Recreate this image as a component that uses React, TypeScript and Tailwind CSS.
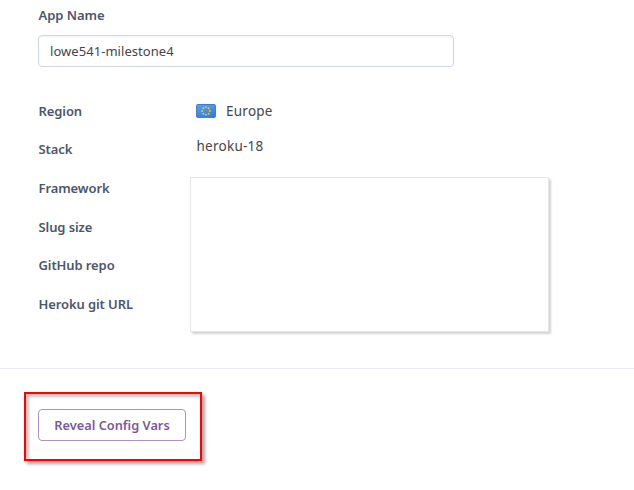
const labels = [
  "Region",
  "Stack",
  "Framework",
  "Slug size",
  "GitHub repo",
  "Heroku git URL",
];

const starAngles = [0, 45, 90, 135, 180, 225, 270, 315];

function EuropeFlag() {
  return (
    <svg width="20" height="14" viewBox="0 0 20 14" aria-label="Europe flag">
      <defs>
        <linearGradient id="flag" x1="0" y1="0" x2="0.4" y2="1">
          <stop offset="0" stopColor="#58a3ee" />
          <stop offset="1" stopColor="#3b7dd8" />
        </linearGradient>
      </defs>
      <rect x="0.5" y="0.5" width="19" height="13" rx="1.2" fill="url(#flag)" stroke="#3b7fd4" />
      {starAngles.map((angle) => (
        <circle
          key={angle}
          cx="10"
          cy="3.2"
          r="1"
          fill="#e8c92c"
          transform={`rotate(${angle} 10 7)`}
        />
      ))}
    </svg>
  );
}

export default function App() {
  return (
    <main className="flex h-[490px] w-[634px] flex-col overflow-hidden bg-white font-['Noto_Sans',sans-serif] text-[13px] text-[#45454b]">
      <section className="flex h-[369px] shrink-0 flex-col border-b border-[#e8e8f3] pl-[38px]">
        <label
          htmlFor="app-name"
          className="mt-[5px] h-5 pl-[0.5px] leading-5 font-semibold tracking-[-0.05px] text-[#4b566b]"
        >
          App Name
        </label>
        <input
          id="app-name"
          defaultValue="lowe541-milestone4"
          className="mt-2.5 h-8 w-[416px] rounded-[4px] border border-[#cfd7e6] bg-white px-[11px] pb-px text-[13px] tracking-[0.05px] text-[#45454b] shadow-[inset_0_1px_2px_#f1f2f8] outline-none"
        />
        <div className="mt-[25px] flex">
          <div className="flex w-[152px] flex-col pt-[8.8px] pl-[0.5px]">
            {labels.map((label) => (
              <div
                key={label}
                className="h-[38.6px] leading-5 font-semibold tracking-[-0.1px] text-[#4b566b]"
              >
                {label}
              </div>
            ))}
          </div>
          <div className="flex flex-col pt-[9px] text-[13.5px] leading-5 tracking-[0.25px]">
            <div className="flex items-center gap-2.5 pl-1.5">
              <EuropeFlag />
              <span>Europe</span>
            </div>
            <div className="mt-[15px] pl-[6.5px]">heroku-18</div>
            <div className="mt-[21px] h-[155px] w-[359px] border border-[#e6e6e6] bg-white shadow-[2px_2px_2px_#d4d4d4]" />
          </div>
        </div>
      </section>
      <section className="pt-[23px] pl-6">
        <div className="h-[69px] w-[178px] border-2 border-[#ff0000] pt-[15px] pl-3 shadow-[3px_3px_3px_#a8a8a8,inset_3px_3px_3px_#c5c5c5]">
          <button className="h-8 w-[148px] rounded-[4px] border border-[#ad92c8] bg-white pt-px text-[12.8px] font-semibold whitespace-nowrap text-[#79589f]">
            Reveal Config Vars
          </button>
        </div>
      </section>
    </main>
  );
}
